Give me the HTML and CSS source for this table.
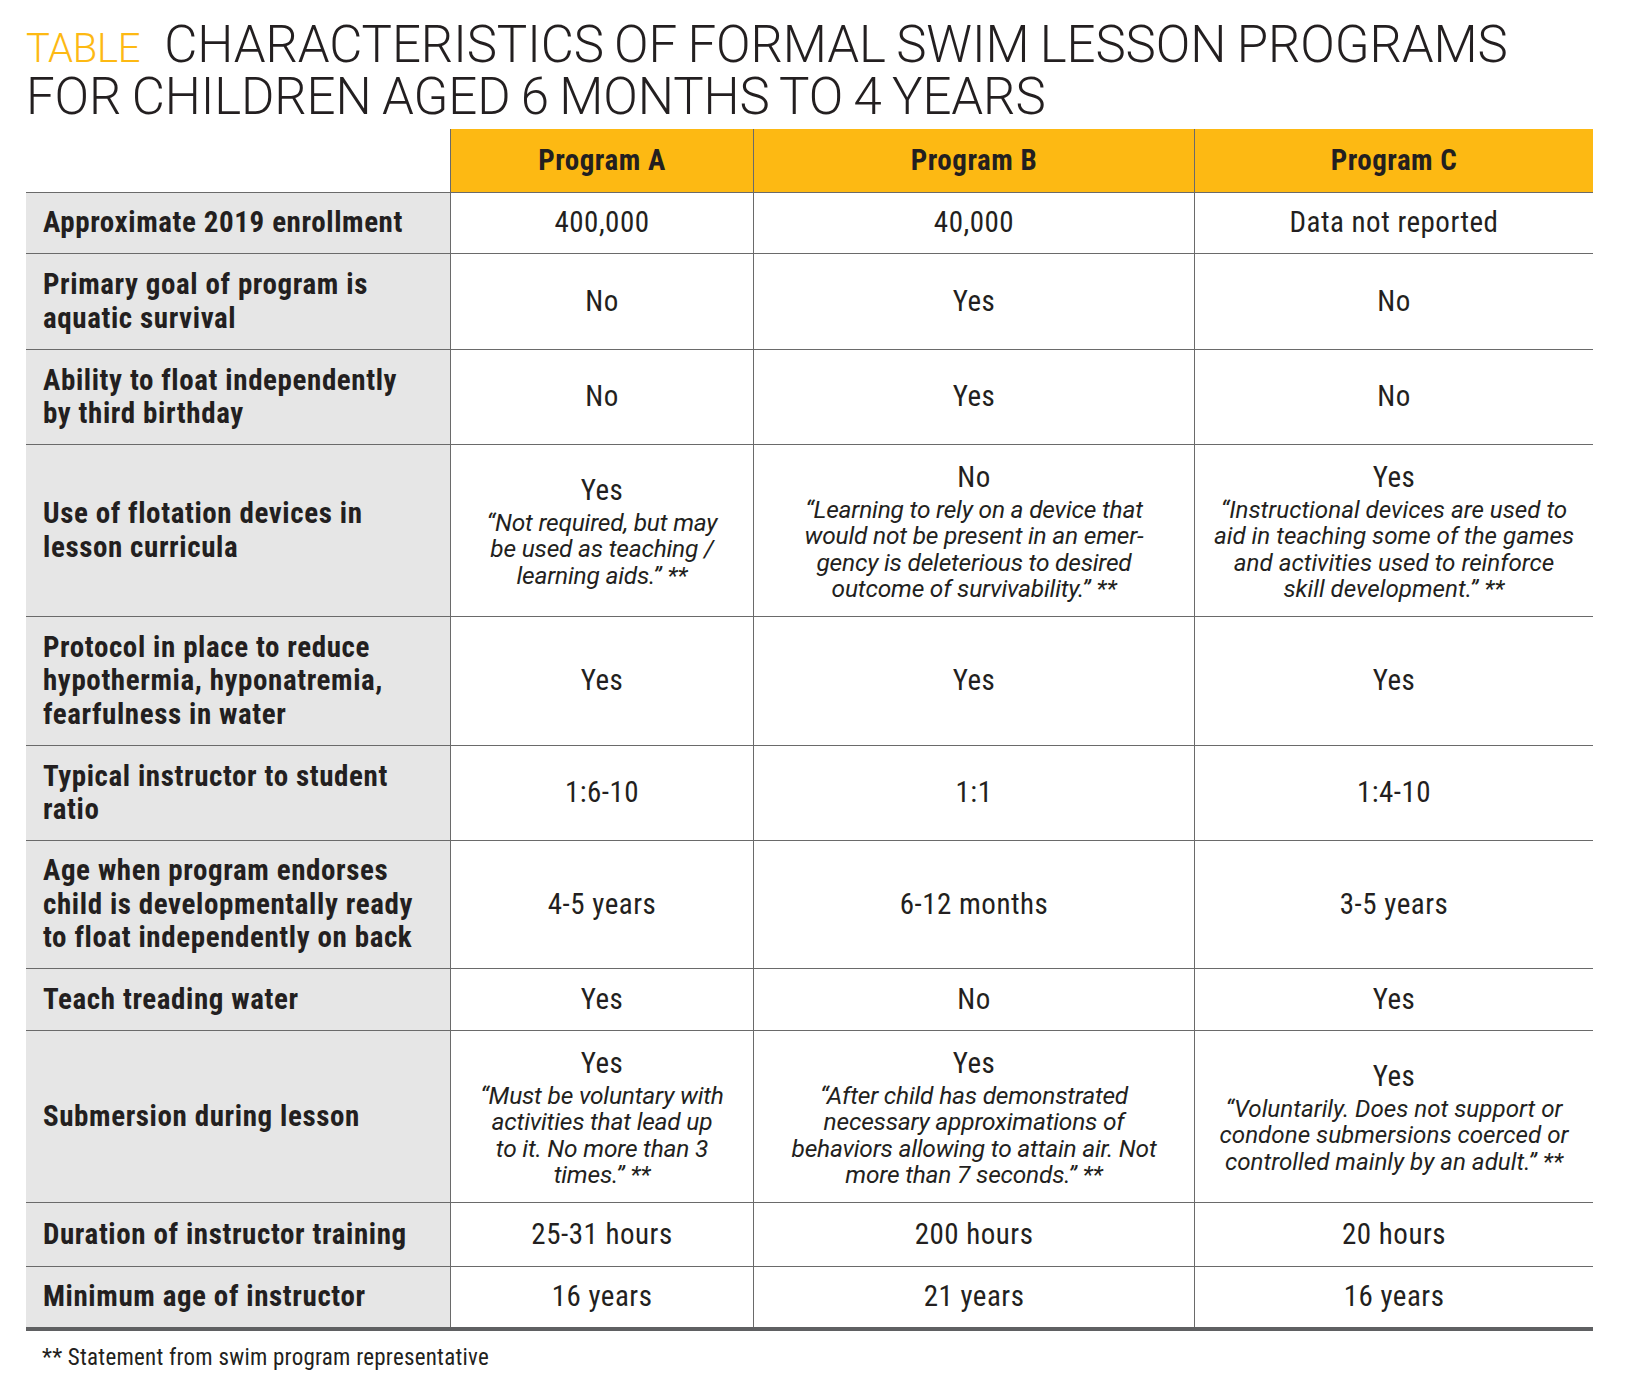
FILE: index.html
```html
<!DOCTYPE html>
<html lang="en">
<head>
<meta charset="utf-8">
<title>Characteristics of formal swim lesson programs</title>
<link rel="stylesheet" href="styles.css">
</head>
<body>
<div class="page">
  <h1 class="title">
    <span class="line"><span class="tag">TABLE</span>CHARACTERISTICS OF FORMAL SWIM LESSON PROGRAMS</span>
    <span class="line">FOR CHILDREN AGED 6 MONTHS TO 4 YEARS</span>
  </h1>

  <div class="table">
    <div class="row h64">
      <div class="cell blank"></div>
      <div class="cell prog">Program A</div>
      <div class="cell prog">Program B</div>
      <div class="cell prog">Program C</div>
    </div>

    <div class="row h61">
      <div class="cell label">Approximate 2019 enrollment</div>
      <div class="cell val">400,000</div>
      <div class="cell val">40,000</div>
      <div class="cell val">Data not reported</div>
    </div>

    <div class="row h96">
      <div class="cell label">Primary goal of program is<br>aquatic survival</div>
      <div class="cell val">No</div>
      <div class="cell val">Yes</div>
      <div class="cell val">No</div>
    </div>

    <div class="row h95">
      <div class="cell label">Ability to float independently<br>by third birthday</div>
      <div class="cell val">No</div>
      <div class="cell val">Yes</div>
      <div class="cell val">No</div>
    </div>

    <div class="row h172">
      <div class="cell label">Use of flotation devices in<br>lesson curricula</div>
      <div class="cell val"><span class="main">Yes</span><span class="quote">“Not required, but may<br>be used as teaching /<br>learning aids.” **</span></div>
      <div class="cell val"><span class="main">No</span><span class="quote">“Learning to rely on a device that<br>would not be present in an emer-<br>gency is deleterious to desired<br>outcome of survivability.” **</span></div>
      <div class="cell val"><span class="main">Yes</span><span class="quote wide">“Instructional devices are used to<br>aid in teaching some of the games<br>and activities used to reinforce<br>skill development.” **</span></div>
    </div>

    <div class="row h129">
      <div class="cell label">Protocol in place to reduce<br>hypothermia, hyponatremia,<br>fearfulness in water</div>
      <div class="cell val">Yes</div>
      <div class="cell val">Yes</div>
      <div class="cell val">Yes</div>
    </div>

    <div class="row h95">
      <div class="cell label">Typical instructor to student<br>ratio</div>
      <div class="cell val">1:6-10</div>
      <div class="cell val">1:1</div>
      <div class="cell val">1:4-10</div>
    </div>

    <div class="row h128">
      <div class="cell label">Age when program endorses<br>child is developmentally ready<br>to float independently on back</div>
      <div class="cell val">4-5 years</div>
      <div class="cell val">6-12 months</div>
      <div class="cell val">3-5 years</div>
    </div>

    <div class="row h62">
      <div class="cell label">Teach treading water</div>
      <div class="cell val">Yes</div>
      <div class="cell val">No</div>
      <div class="cell val">Yes</div>
    </div>

    <div class="row h172">
      <div class="cell label">Submersion during lesson</div>
      <div class="cell val"><span class="main">Yes</span><span class="quote">“Must be voluntary with<br>activities that lead up<br>to it. No more than 3<br>times.” **</span></div>
      <div class="cell val"><span class="main">Yes</span><span class="quote">“After child has demonstrated<br>necessary approximations of<br>behaviors allowing to attain air. Not<br>more than 7 seconds.” **</span></div>
      <div class="cell val"><span class="main">Yes</span><span class="quote wide">“Voluntarily. Does not support or<br>condone submersions coerced or<br>controlled mainly by an adult.” **</span></div>
    </div>

    <div class="row h64">
      <div class="cell label">Duration of instructor training</div>
      <div class="cell val">25-31 hours</div>
      <div class="cell val">200 hours</div>
      <div class="cell val">20 hours</div>
    </div>

    <div class="row h64 last">
      <div class="cell label">Minimum age of instructor</div>
      <div class="cell val">16 years</div>
      <div class="cell val">21 years</div>
      <div class="cell val">16 years</div>
    </div>
  </div>

  <p class="note">** Statement from swim program representative</p>
</div>
</body>
</html>
```
FILE: styles.css
```css
html, body {
  margin: 0;
  padding: 0;
  background: #ffffff;
}

body {
  font-family: "Roboto", "Liberation Sans", Arial, sans-serif;
  font-stretch: condensed;
  color: #231f20;
}

.page {
  padding: 19px 0 0 26px;
}

/* ---------- title ---------- */
.title {
  margin: 0 0 6px 0;
  font-size: 51px;
  line-height: 52px;
  font-weight: 300;
  font-stretch: normal;
  letter-spacing: -0.1px;
  word-spacing: -2px;
  color: #231f20;
  white-space: nowrap;
}

.title .line {
  display: block;
  height: 52px;
}

.tag {
  display: inline-block;
  height: 52px;
  font-size: 40px;
  letter-spacing: -0.3px;
  color: #fdb913;
  margin-right: 24px;
}

/* ---------- table ---------- */
.table {
  width: 1567px;
  display: flex;
  flex-direction: column;
}

.row {
  display: grid;
  grid-template-columns: 424px 303px 441px 399px;
  box-sizing: border-box;
  border-bottom: 1px solid #6a6a6a;
}

.row.h61 { height: 61px; }
.row.h62 { height: 62px; }
.row.h64 { height: 64px; }
.row.h95 { height: 95px; }
.row.h96 { height: 96px; }
.row.h128 { height: 128px; }
.row.h129 { height: 129px; }
.row.h172 { height: 172px; }

.row.last {
  border-bottom: 4px solid #5f6062;
}

.cell {
  display: flex;
  flex-direction: column;
  justify-content: center;
  box-sizing: border-box;
  border-left: 1px solid #6a6a6a;
  font-size: 29px;
  line-height: 33.5px;
  letter-spacing: 0.5px;
}

.cell.blank,
.cell.label {
  border-left: none;
}

.cell.label {
  background: #e6e6e6;
  padding-left: 17px;
  font-weight: 700;
  letter-spacing: 0.6px;
  white-space: nowrap;
}

.cell.prog {
  background: #fdb913;
  align-items: center;
  font-weight: 700;
}

.cell.val {
  align-items: center;
  text-align: center;
  white-space: nowrap;
}

.main {
  display: block;
  line-height: 36px;
  padding-bottom: 2px;
}

.quote {
  display: block;
  font-style: italic;
  font-stretch: normal;
  font-size: 24.5px;
  line-height: 26.3px;
  letter-spacing: -0.2px;
}

.quote.wide {
  font-size: 24.2px;
  letter-spacing: 0;
}

/* ---------- footnote ---------- */
.note {
  margin: 14px 0 0 16px;
  font-size: 23px;
  line-height: 26px;
  letter-spacing: 0.25px;
}
```
